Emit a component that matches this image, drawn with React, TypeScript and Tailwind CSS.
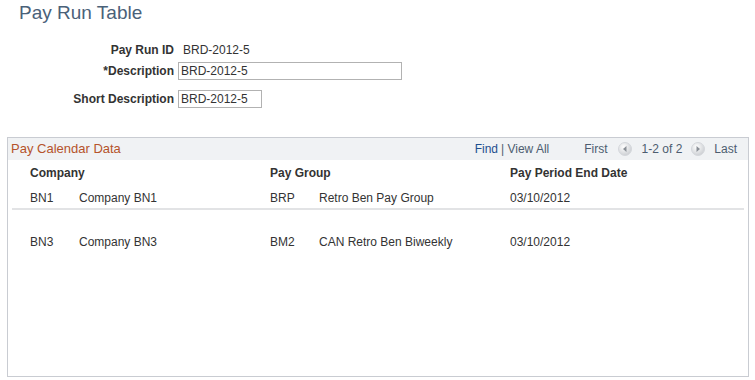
import React from "react";

const rows = [
  { co: "BN1", coName: "Company BN1", grp: "BRP", grpName: "Retro Ben Pay Group", date: "03/10/2012" },
  { co: "BN3", coName: "Company BN3", grp: "BM2", grpName: "CAN Retro Ben Biweekly", date: "03/10/2012" },
];

function NavArrow({ dir }: { dir: "left" | "right" }) {
  return (
    <svg width="14" height="14" viewBox="0 0 14 14">
      <defs>
        <radialGradient id={`g-${dir}`} cx="40%" cy="35%" r="70%">
          <stop offset="0%" stopColor="#ffffff" />
          <stop offset="100%" stopColor="#c9ccd0" />
        </radialGradient>
      </defs>
      <circle cx="7" cy="7" r="6.5" fill={`url(#g-${dir})`} stroke="#d4d7db" />
      {dir === "left" ? (
        <polygon points="8.5,4 5,7 8.5,10" fill="#8a8f96" />
      ) : (
        <polygon points="5.5,4 9,7 5.5,10" fill="#8a8f96" />
      )}
    </svg>
  );
}

export default function App() {
  return (
    <div className="w-[755px] h-[380px] bg-white text-[12px] text-[#333] font-['Liberation_Sans',Arial,sans-serif] overflow-hidden">
      {/* Title */}
      <h1 className="pl-[19px] pt-[1px] text-[19px] leading-[24px] text-[#4a6179]">Pay Run Table</h1>

      {/* Form */}
      <div className="mt-[17px] grid grid-cols-[176px_auto] items-center">
        <div className="text-right font-bold pr-[2px] leading-[16px]">Pay Run ID</div>
        <div className="pl-[7px] leading-[16px]">BRD-2012-5</div>

        <div className="text-right font-bold pr-[2px] mt-[4px]">*Description</div>
        <div className="pl-[2px] mt-[4px]">
          <div className="w-[224px] h-[18px] border border-[#b2b2b2] pl-[2px] leading-[16px]">BRD-2012-5</div>
        </div>

        <div className="text-right font-bold pr-[2px] mt-[10px]">Short Description</div>
        <div className="pl-[2px] mt-[10px]">
          <div className="w-[84px] h-[18px] border border-[#b2b2b2] pl-[2px] leading-[16px]">BRD-2012-5</div>
        </div>
      </div>

      {/* Grid panel */}
      <div className="mx-[7px] mt-[29px] w-[742px] h-[240px] border border-[#c9ccd2]">
        <div className="h-[22px] bg-[#f0f2f4] flex items-center px-[3px]">
          <span className="text-[13px] text-[#b5532b]">Pay Calendar Data</span>
          <div className="ml-auto flex items-center pr-[8px]">
            <span className="text-[#1f4f8f]">Find</span>
            <span className="text-[#4d5d70] ml-[3px]">| View All</span>
            <span className="text-[#4d5d70] ml-[35px]">First</span>
            <span className="ml-[10px] flex"><NavArrow dir="left" /></span>
            <span className="text-[#4d5d70] ml-[10px]">1-2 of 2</span>
            <span className="ml-[9px] flex"><NavArrow dir="right" /></span>
            <span className="text-[#4d5d70] ml-[9px]">Last</span>
          </div>
        </div>

        <div className="grid grid-cols-[240px_240px_auto] pl-[22px] pt-[5px] pb-[9px] font-bold leading-[16px]">
          <div>Company</div>
          <div>Pay Group</div>
          <div>Pay Period End Date</div>
        </div>

        {rows.map((r, i) => (
          <div key={r.co} className={i === 0 ? "mx-[4px] border-b-2 border-[#e2e3e5] pb-[2px]" : "mx-[4px] pt-[24px]"}>
            <div className="grid grid-cols-[240px_240px_auto] pl-[18px] leading-[16px]">
              <div className="flex">
                <span className="w-[49px]">{r.co}</span>
                <span>{r.coName}</span>
              </div>
              <div className="flex">
                <span className="w-[49px]">{r.grp}</span>
                <span>{r.grpName}</span>
              </div>
              <div>{r.date}</div>
            </div>
          </div>
        ))}
      </div>
    </div>
  );
}
